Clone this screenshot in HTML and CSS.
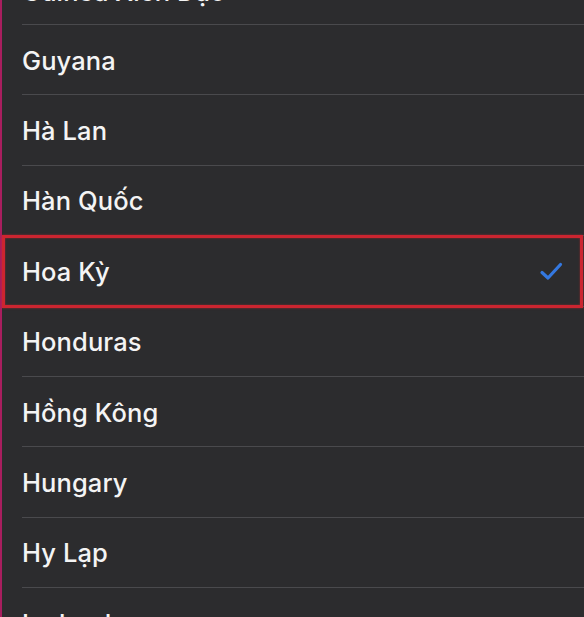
FILE: index.html
```html
<!DOCTYPE html>
<html lang="vi">
<head>
<meta charset="utf-8">
<link rel="stylesheet" href="styles.css">
</head>
<body>
<div class="page">
  <ul class="list">
    <li class="row first"><div class="cell"><span class="name">Guinea Xích Đạo</span></div></li>
    <li class="row"><div class="cell"><span class="name">Guyana</span></div></li>
    <li class="row"><div class="cell"><span class="name">Hà Lan</span></div></li>
    <li class="row"><div class="cell"><span class="name">Hàn Quốc</span></div></li>
    <li class="row selected"><div class="cell"><span class="name">Hoa Kỳ</span>
      <svg class="check" width="24" height="20" viewBox="0 0 24 20"><path d="M3 11.5 L9 17 L21.5 3.5" fill="none" stroke="#3478e0" stroke-width="3.2" stroke-linecap="round" stroke-linejoin="round"/></svg>
    </div></li>
    <li class="row"><div class="cell"><span class="name">Honduras</span></div></li>
    <li class="row"><div class="cell"><span class="name">Hồng Kông</span></div></li>
    <li class="row"><div class="cell"><span class="name">Hungary</span></div></li>
    <li class="row"><div class="cell"><span class="name">Hy Lạp</span></div></li>
    <li class="row"><div class="cell"><span class="name">Iceland</span></div></li>
  </ul>
</div>
</body>
</html>
```
FILE: styles.css
```css
html, body {
  margin: 0;
  padding: 0;
  background: #2c2c2e;
  height: 100%;
  overflow: hidden;
}
.page {
  min-height: 100%;
  border-left: 2px solid #a81e5e;
  box-sizing: border-box;
}
.list {
  list-style: none;
  margin: -45.4px 0 0 0;
  padding: 0;
}
.row {
  position: relative;
  padding-left: 20px;
}
.cell {
  height: 70.4px;
  box-sizing: border-box;
  border-bottom: 1px solid #4a4a4d;
  display: flex;
  align-items: center;
  padding-right: 20px;
  padding-top: 1px;
}
.first .cell {
  padding-top: 5px;
}
.name {
  font-family: Inter, "Noto Sans", sans-serif;
  font-weight: 500;
  font-size: 25.5px;
  color: #f4f4f4;
  letter-spacing: 0.1px;
}
.check {
  margin-left: auto;
  margin-right: 1px;
}
.selected::before {
  content: "";
  position: absolute;
  left: 0;
  right: 1px;
  top: -1px;
  bottom: -1px;
  border: 3px solid #cc2530;
  box-shadow: 0 0 2px rgba(220, 40, 50, 0.6), inset 0 0 2px rgba(220, 40, 50, 0.6);
  pointer-events: none;
}
```
